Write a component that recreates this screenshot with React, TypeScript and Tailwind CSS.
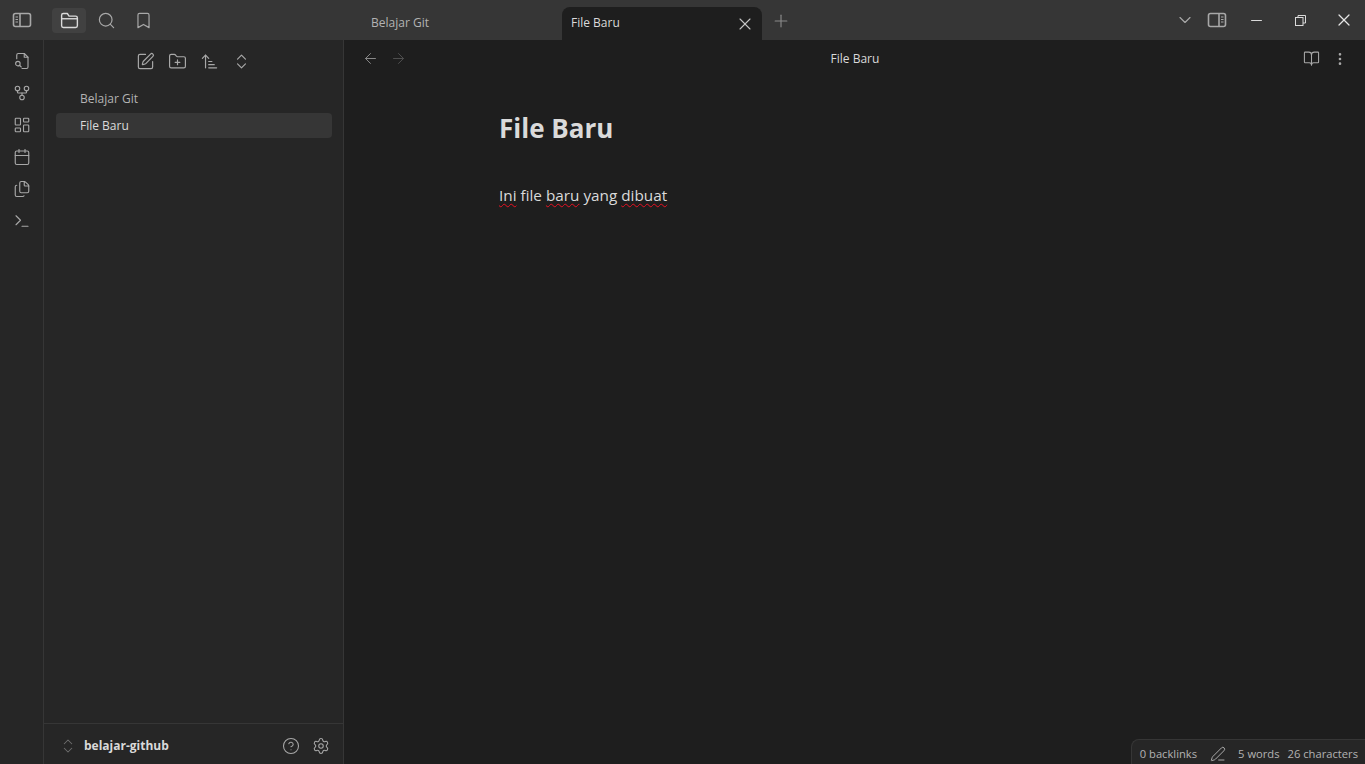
import {
  ArrowLeft,
  ArrowRight,
  ArrowUpNarrowWide,
  BookOpen,
  Bookmark,
  Calendar,
  ChevronDown,
  ChevronsUpDown,
  Files,
  FolderPlus,
  GitFork,
  LayoutDashboard,
  EllipsisVertical,
  Minus,
  PenLine,
  Plus,
  Search,
  Settings,
  SquarePen,
  Terminal,
  CircleHelp,
  X,
} from "lucide-react";

function FileFindIcon({ size = 18 }: { size?: number }) {
  return (
    <svg width={size} height={size} viewBox="0 0 24 24" fill="none" stroke="currentColor" strokeWidth="1.5" strokeLinecap="round" strokeLinejoin="round">
      <path d="M5 9V4a2 2 0 0 1 2-2h8l5 5v13a2 2 0 0 1-2 2h-6" />
      <path d="M15 2v5h5" />
      <circle cx="6.5" cy="15.5" r="3" />
      <path d="m9 18 2 2" />
    </svg>
  );
}

const ribbonIcons = [FileFindIcon, GitFork, LayoutDashboard, Calendar, Files, Terminal];
const navIcons = [SquarePen, FolderPlus, ArrowUpNarrowWide, ChevronsUpDown];

function SidebarLeftIcon() {
  return (
    <svg width="20" height="18" viewBox="0 0 20 18" fill="none" stroke="currentColor" strokeWidth="1.6">
      <rect x="1.5" y="2.5" width="17" height="13" rx="2" />
      <path d="M8 2.5v13" />
      <path d="M3.5 6h2.5M3.5 8.5h2.5M3.5 11h2.5" strokeWidth="1" />
    </svg>
  );
}

function SidebarRightIcon() {
  return (
    <svg width="20" height="18" viewBox="0 0 20 18" fill="none" stroke="currentColor" strokeWidth="1.6">
      <rect x="1.5" y="2.5" width="17" height="13" rx="2" />
      <path d="M12 2.5v13" />
      <path d="M14 6h2.5M14 8.5h2.5M14 11h2.5" strokeWidth="1" />
    </svg>
  );
}

function FolderIcon() {
  return (
    <svg width="21" height="21" viewBox="0 0 24 24" fill="none" stroke="currentColor" strokeWidth="1.6" strokeLinejoin="round">
      <path d="M3 6a2 2 0 0 1 2-2h4.5l2 3H19a2 2 0 0 1 2 2v9a2 2 0 0 1-2 2H5a2 2 0 0 1-2-2z" />
      <path d="M3 10h18" />
    </svg>
  );
}

function RestoreIcon() {
  return (
    <svg width="11" height="11" viewBox="0 0 11 11" fill="none" stroke="currentColor" strokeWidth="1">
      <rect x="0.5" y="2.5" width="7.5" height="8" />
      <path d="M3 2.5V0.5h7.5V8H8" />
    </svg>
  );
}

export default function App() {
  return (
    <div className="flex h-[764px] w-[1365px] flex-col overflow-hidden bg-[#1e1e1e] font-['Open_Sans',sans-serif] text-[#dadada]">
      <header className="flex h-10 shrink-0 bg-[#363636]">
        <div className="flex w-[362px] items-center gap-1 pl-3 text-[#a8a8a8]">
          <SidebarLeftIcon />
          <span className="ml-[16px] grid h-[25px] w-[34px] place-items-center rounded bg-[#4a4a4a]/60 text-[#dadada]">
            <FolderIcon />
          </span>
          <span className="grid w-8 place-items-center">
            <Search size={19} strokeWidth={1.5} />
          </span>
          <span className="grid w-[34px] place-items-center">
            <Bookmark size={19} strokeWidth={1.5} />
          </span>
        </div>
        <div className="flex w-[200px] items-center pl-[9px] pt-[5px] text-[12px] text-[#b3b3b3]">Belajar Git</div>
        <div className="mt-[7px] flex h-[33px] w-[200px] items-center justify-between rounded-t-lg bg-[#1e1e1e] pl-[9px] pr-[7px] text-[12px] text-[#dadada]">
          <span className="pb-[2px]">File Baru</span>
          <X size={20} strokeWidth={1.3} className="text-[#c4c4c4]" />
        </div>
        <div className="flex w-[38px] items-center justify-center pt-[1px] text-[#8a8a8a]">
          <Plus size={20} strokeWidth={1.4} />
        </div>
        <div className="flex flex-1 items-center justify-end text-[#a8a8a8]">
          <ChevronDown size={20} strokeWidth={1.4} className="mr-3" />
          <SidebarRightIcon />
          <div className="ml-2 flex w-[42px] justify-center text-[#dadada]">
            <Minus size={17} strokeWidth={1.6} />
          </div>
          <div className="flex w-[46px] justify-center text-[#dadada]">
            <RestoreIcon />
          </div>
          <div className="flex w-[42px] justify-center text-[#e6e6e6]">
            <X size={20} strokeWidth={1.5} />
          </div>
        </div>
      </header>

      <div className="flex min-h-0 flex-1">
        <aside className="flex w-[44px] shrink-0 flex-col items-center gap-[14px] border-r border-[#363636] bg-[#262626] pt-[12px] text-[#a8a8a8]">
          {ribbonIcons.map((Icon, i) => (
            <Icon key={i} size={18} strokeWidth={1.5} />
          ))}
        </aside>

        <aside className="flex w-[300px] shrink-0 flex-col border-r border-[#363636] bg-[#262626]">
          <div className="flex h-[42px] items-center justify-center gap-[13px] text-[#a8a8a8]">
            {navIcons.map((Icon, i) => (
              <Icon key={i} size={19} strokeWidth={1.5} />
            ))}
          </div>
          <div className="flex flex-1 flex-col gap-[2px] pl-3 pr-[11px] pt-1 text-[12px]">
            <div className="flex h-[25px] items-center pl-6 text-[#b3b3b3]">Belajar Git</div>
            <div className="flex h-[25px] items-center rounded bg-[#363636] pl-6 text-[#dadada]">File Baru</div>
          </div>
          <div className="flex h-[41px] items-center border-t border-[#363636] pl-[15px] pr-[13px] pt-[3px]">
            <ChevronsUpDown size={18} strokeWidth={1.4} className="text-[#6e6e6e]" />
            <span className="ml-[7px] flex-1 text-[12px] font-bold text-[#dadada]">belajar-github</span>
            <CircleHelp size={18} strokeWidth={1.4} className="text-[#a8a8a8]" />
            <Settings size={18} strokeWidth={1.4} className="ml-3 text-[#a8a8a8]" />
          </div>
        </aside>

        <main className="relative flex min-w-0 flex-1 flex-col">
          <div className="flex h-[37px] items-center pl-[18px] pr-[17px]">
            <ArrowLeft size={17} strokeWidth={1.4} className="text-[#8a8a8a]" />
            <ArrowRight size={17} strokeWidth={1.4} className="ml-[11px] text-[#4f4f4f]" />
            <span className="flex-1 text-center text-[12px] text-[#dadada]">File Baru</span>
            <BookOpen size={17} strokeWidth={1.5} className="text-[#a8a8a8]" />
            <EllipsisVertical size={16} strokeWidth={2} className="ml-[12px] text-[#a8a8a8]" />
          </div>
          <div className="pl-[155px] pt-[32px]">
            <h1 className="text-[26px] leading-[38px] font-bold text-[#dadada]">File Baru</h1>
            <p className="mt-[36px] text-[15.3px] leading-[24px] text-[#dadada]">
              <span className="underline decoration-[#e81123] decoration-wavy decoration-1 underline-offset-2">Ini</span> file{" "}
              <span className="underline decoration-[#e81123] decoration-wavy decoration-1 underline-offset-2">baru</span> yang{" "}
              <span className="underline decoration-[#e81123] decoration-wavy decoration-1 underline-offset-2">dibuat</span>
            </p>
          </div>
          <div className="absolute right-0 bottom-0 flex h-[25px] items-center gap-[8px] rounded-tl-lg border-t border-l border-[#363636] bg-[#262626] pt-[4px] pr-[7px] pl-[8px] text-[11.2px] text-[#b3b3b3]">
            <span>0 backlinks</span>
            <PenLine size={16} strokeWidth={1.4} className="ml-[5px] mr-[4px]" />
            <span>5 words</span>
            <span>26 characters</span>
          </div>
        </main>
      </div>
    </div>
  );
}
